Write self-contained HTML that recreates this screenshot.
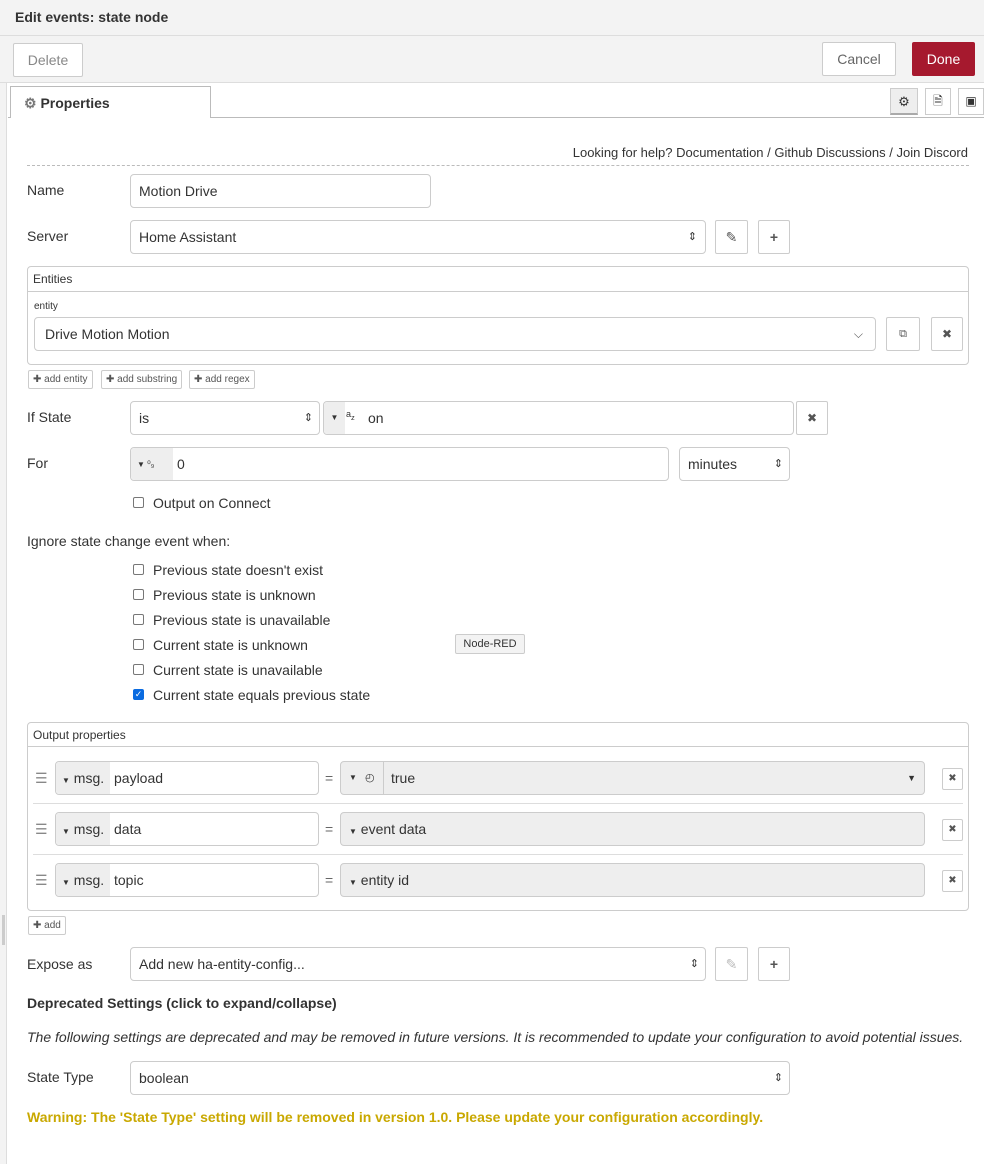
<!DOCTYPE html>
<html><head><meta charset="utf-8"><style>
*{box-sizing:border-box;margin:0;padding:0}
body{width:984px;height:1164px;position:relative;background:#fff;font-family:"Liberation Sans",Arial,sans-serif;font-size:14px;color:#333;overflow:hidden}
.a{position:absolute}
.inp{position:absolute;border:1px solid #ccc;border-radius:4px;background:#fff;height:34px;line-height:32px;padding-left:8px;font-size:14px;color:#333}
.btn{position:absolute;border:1px solid #ccc;border-radius:2px;background:#fff;text-align:center;color:#555}
.lbl{position:absolute;font-size:14px;color:#333}
.cb{position:absolute;width:11px;height:11px;border:1px solid #777;border-radius:2px;background:#fff}
.sm{position:absolute;border:1px solid #ccc;border-radius:2px;background:#fff;font-size:10px;color:#555;height:19px;line-height:17px;padding:0 4px}
.gray{background:#eee}
</style></head><body>
<div class="a" style="left:0;top:0;width:984px;height:83px;background:#f3f3f3;border-bottom:1px solid #ddd"></div>
<div class="a" style="left:0;top:35px;width:984px;height:1px;background:#ddd"></div>
<div class="a" style="left:15px;top:9px;font-weight:bold;font-size:14px;color:#333">Edit events: state node</div>
<div class="btn" style="left:13px;top:43px;width:70px;height:34px;line-height:32px;color:#888">Delete</div>
<div class="btn" style="left:822px;top:42px;width:74px;height:34px;line-height:32px;color:#666">Cancel</div>
<div class="a" style="left:912px;top:42px;width:63px;height:34px;line-height:34px;background:#a6192e;color:#fff;text-align:center;border-radius:2px">Done</div>
<div class="a" style="left:0;top:83px;width:7px;height:1081px;background:#f3f3f3;border-right:1px solid #ddd"></div>
<div class="a" style="left:2px;top:915px;width:3px;height:30px;background:#ccc"></div>
<div class="a" style="left:8px;top:117px;width:976px;height:1px;background:#bbb"></div>
<div class="a" style="left:10px;top:86px;width:201px;height:32px;background:#fff;border:1px solid #bbb;border-bottom:none"></div>
<div class="a" style="left:24px;top:95px;font-weight:bold;color:#333"><span style="color:#777">⚙</span> Properties</div>
<div class="a" style="left:890px;top:88px;width:28px;height:27px;background:#eee;border:1px solid #ccc;border-bottom:2px solid #aaa;text-align:center;line-height:25px;font-size:13px">⚙</div>
<div class="a" style="left:925px;top:88px;width:26px;height:27px;border:1px solid #ccc;text-align:center;line-height:25px;font-size:12px">🗎</div>
<div class="a" style="left:958px;top:88px;width:26px;height:27px;border:1px solid #ccc;text-align:center;line-height:25px;font-size:12px">▣</div>
<div class="a" style="right:16px;top:145px;font-size:13px;color:#333">Looking for help? Documentation / Github Discussions / Join Discord</div>
<div class="a" style="left:27px;top:165px;width:942px;border-top:1px dashed #bbb"></div>

<div class="lbl" style="left:27px;top:182px">Name</div>
<div class="inp" style="left:130px;top:174px;width:301px">Motion Drive</div>
<div class="lbl" style="left:27px;top:228px">Server</div>
<div class="inp" style="left:130px;top:220px;width:576px">Home Assistant<span class="a" style="right:8px;top:0;font-size:11px">⇕</span></div>
<div class="btn" style="left:715px;top:220px;width:33px;height:34px;line-height:32px">✎</div>
<div class="btn" style="left:758px;top:220px;width:32px;height:34px;line-height:32px;font-weight:bold">+</div>

<div class="a" style="left:27px;top:266px;width:942px;height:99px;border:1px solid #ccc;border-radius:4px"></div>
<div class="a" style="left:28px;top:291px;width:940px;height:1px;background:#ccc"></div>
<div class="a" style="left:33px;top:272px;font-size:12px">Entities</div>
<div class="a" style="left:34px;top:301px;font-size:10px">entity</div>
<div class="inp" style="left:34px;top:317px;width:842px;padding-left:10px">Drive Motion Motion<span class="a" style="right:12px;top:0;font-size:12px;color:#555">⌵</span></div>
<div class="btn" style="left:886px;top:317px;width:34px;height:34px;line-height:32px;font-size:11px">⧉</div>
<div class="btn" style="left:931px;top:317px;width:32px;height:34px;line-height:32px;font-size:12px">✖</div>
<div class="sm" style="left:28px;top:370px">✚ add entity</div>
<div class="sm" style="left:101px;top:370px">✚ add substring</div>
<div class="sm" style="left:189px;top:370px">✚ add regex</div>

<div class="lbl" style="left:27px;top:409px">If State</div>
<div class="inp" style="left:130px;top:401px;width:190px">is<span class="a" style="right:6px;top:0;font-size:11px">⇕</span></div>
<div class="inp" style="left:323px;top:401px;width:471px;padding-left:0"><span class="a gray" style="left:0;top:0;width:21px;height:32px;border-radius:4px 0 0 4px;font-size:8px;text-align:center">▼ </span><span class="a" style="left:22px;top:-4px;font-size:9px">a<sub>z</sub></span><span class="a" style="left:44px;top:0">on</span></div>
<div class="btn" style="left:796px;top:401px;width:32px;height:34px;line-height:32px;font-size:12px">✖</div>

<div class="lbl" style="left:27px;top:455px">For</div>
<div class="inp" style="left:130px;top:447px;width:539px;padding-left:0"><span class="a gray" style="left:0;top:0;width:42px;height:32px;border-radius:4px 0 0 4px;font-size:8px;padding-left:6px">▼ <span style="font-size:9px">⁰₉</span></span><span class="a" style="left:46px;top:0">0</span></div>
<div class="inp" style="left:679px;top:447px;width:111px">minutes<span class="a" style="right:6px;top:0;font-size:11px">⇕</span></div>
<div class="cb" style="left:133px;top:497px"></div><div class="lbl" style="left:153px;top:495px">Output on Connect</div>

<div class="lbl" style="left:27px;top:533px">Ignore state change event when:</div>
<div class="cb" style="left:133px;top:564px"></div><div class="lbl" style="left:153px;top:562px">Previous state doesn't exist</div>
<div class="cb" style="left:133px;top:589px"></div><div class="lbl" style="left:153px;top:587px">Previous state is unknown</div>
<div class="cb" style="left:133px;top:614px"></div><div class="lbl" style="left:153px;top:612px">Previous state is unavailable</div>
<div class="cb" style="left:133px;top:639px"></div><div class="lbl" style="left:153px;top:637px">Current state is unknown</div>
<div class="cb" style="left:133px;top:664px"></div><div class="lbl" style="left:153px;top:662px">Current state is unavailable</div>
<div class="cb" style="left:133px;top:689px;background:#0a6be0;border-color:#0a6be0;color:#fff;font-size:9px;line-height:9px;text-align:center">✓</div><div class="lbl" style="left:153px;top:687px">Current state equals previous state</div>
<div class="a" style="left:455px;top:634px;width:70px;height:20px;border:1px solid #ccc;background:#f3f3f3;font-size:11px;line-height:18px;text-align:center;border-radius:2px">Node-RED</div>

<div class="a" style="left:27px;top:722px;width:942px;height:189px;border:1px solid #ccc;border-radius:4px"></div>
<div class="a" style="left:28px;top:746px;width:940px;height:1px;background:#ccc"></div>
<div class="a" style="left:33px;top:728px;font-size:12px">Output properties</div>
<div class="a" style="left:33px;top:803px;width:930px;height:1px;background:#ddd"></div>
<div class="a" style="left:33px;top:854px;width:930px;height:1px;background:#ddd"></div>

<div class="a" style="left:35px;top:770px;color:#888">☰</div>
<div class="inp" style="left:55px;top:761px;width:264px;padding-left:0"><span class="a gray" style="left:0;top:0;width:54px;height:32px;border-radius:4px 0 0 4px;padding-left:6px"><span style="font-size:8px">▼</span> msg.</span><span class="a" style="left:58px;top:0">payload</span></div>
<div class="a" style="left:325px;top:770px;color:#666">=</div>
<div class="inp gray" style="left:340px;top:761px;width:585px;padding-left:0"><span class="a" style="left:8px;top:0;font-size:8px">▼</span><span class="a" style="left:24px;top:0;font-size:11px">◴</span><span class="a" style="left:42px;top:0;width:1px;height:32px;background:#ccc"></span><span class="a" style="left:50px;top:0">true</span><span class="a" style="right:8px;top:0;font-size:9px">▼</span></div>
<div class="btn" style="left:942px;top:768px;width:21px;height:22px;line-height:20px;font-size:10px">✖</div>

<div class="a" style="left:35px;top:821px;color:#888">☰</div>
<div class="inp" style="left:55px;top:812px;width:264px;padding-left:0"><span class="a gray" style="left:0;top:0;width:54px;height:32px;border-radius:4px 0 0 4px;padding-left:6px"><span style="font-size:8px">▼</span> msg.</span><span class="a" style="left:58px;top:0">data</span></div>
<div class="a" style="left:325px;top:821px;color:#666">=</div>
<div class="inp gray" style="left:340px;top:812px;width:585px"><span style="font-size:8px">▼</span> event data</div>
<div class="btn" style="left:942px;top:819px;width:21px;height:22px;line-height:20px;font-size:10px">✖</div>

<div class="a" style="left:35px;top:872px;color:#888">☰</div>
<div class="inp" style="left:55px;top:863px;width:264px;padding-left:0"><span class="a gray" style="left:0;top:0;width:54px;height:32px;border-radius:4px 0 0 4px;padding-left:6px"><span style="font-size:8px">▼</span> msg.</span><span class="a" style="left:58px;top:0">topic</span></div>
<div class="a" style="left:325px;top:872px;color:#666">=</div>
<div class="inp gray" style="left:340px;top:863px;width:585px"><span style="font-size:8px">▼</span> entity id</div>
<div class="btn" style="left:942px;top:870px;width:21px;height:22px;line-height:20px;font-size:10px">✖</div>

<div class="sm" style="left:28px;top:916px">✚ add</div>

<div class="lbl" style="left:27px;top:956px">Expose as</div>
<div class="inp" style="left:130px;top:947px;width:576px">Add new ha-entity-config...<span class="a" style="right:6px;top:0;font-size:11px">⇕</span></div>
<div class="btn" style="left:715px;top:947px;width:33px;height:34px;line-height:32px;color:#bbb">✎</div>
<div class="btn" style="left:758px;top:947px;width:32px;height:34px;line-height:32px;font-weight:bold">+</div>

<div class="a" style="left:27px;top:995px;font-weight:bold">Deprecated Settings (click to expand/collapse)</div>
<div class="a" style="left:27px;top:1029px;font-style:italic">The following settings are deprecated and may be removed in future versions. It is recommended to update your configuration to avoid potential issues.</div>
<div class="lbl" style="left:27px;top:1069px">State Type</div>
<div class="inp" style="left:130px;top:1061px;width:660px">boolean<span class="a" style="right:6px;top:0;font-size:11px">⇕</span></div>
<div class="a" style="left:27px;top:1109px;font-weight:bold;color:#c9a800">Warning: The 'State Type' setting will be removed in version 1.0. Please update your configuration accordingly.</div>
</body></html>
